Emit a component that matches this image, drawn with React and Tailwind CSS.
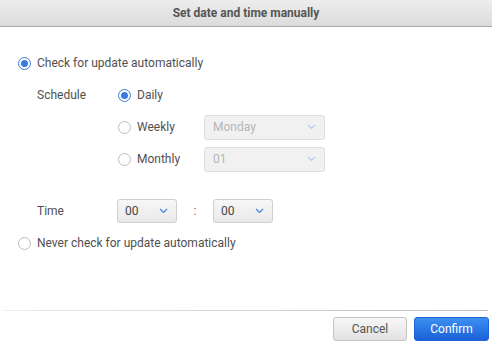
import React from "react";

const font = { fontFamily: "Roboto, 'Liberation Sans', sans-serif" };

function Radio({ checked }) {
  return checked ? (
    <span className="flex h-[13px] w-[13px] shrink-0 items-center justify-center rounded-full border-[1.5px] border-[#3a7be0] bg-white">
      <span className="h-[7px] w-[7px] rounded-full bg-[#3a7be0]" />
    </span>
  ) : (
    <span className="h-[13px] w-[13px] shrink-0 rounded-full border border-[#bdbdbd] bg-white" />
  );
}

function Chevron({ color }) {
  return (
    <svg width="9" height="6" viewBox="0 0 9 6" fill="none">
      <path d="M1 1l3.5 3.5L8 1" stroke={color} strokeWidth="1.2" />
    </svg>
  );
}

function DisabledSelect({ value }) {
  return (
    <div className="flex h-[25px] w-[121px] items-center justify-between rounded-[3px] border border-[#dedede] bg-[#f1f1f1] pl-[8px] pr-[8px] text-[12px] text-[#b5b5b5]">
      <span>{value}</span>
      <Chevron color="#b9c9e2" />
    </div>
  );
}

function TimeSelect({ value }) {
  return (
    <div className="flex h-[24px] w-[60px] items-center justify-between rounded-[3px] border border-[#cfcfcf] bg-gradient-to-b from-[#f7f7f7] to-[#e9e9e9] pl-[7px] pr-[8px] text-[12px] text-[#444]">
      <span>{value}</span>
      <Chevron color="#3f82e0" />
    </div>
  );
}

export default function App() {
  return (
    <div style={font} className="flex h-[347px] w-[492px] flex-col bg-white text-[12px] text-[#505050]">
      <div className="flex h-[27px] shrink-0 items-center justify-center border-b border-[#a9a9a9] bg-gradient-to-b from-[#ededed] to-[#dcdcdc] text-[12px] font-bold text-[#555]">
        Set date and time manually
      </div>
      <div className="flex flex-1 flex-col pt-[20px]">
        <div className="flex h-[32px] items-center gap-[6px] pl-[18px]">
          <Radio checked />
          <span>Check for update automatically</span>
        </div>
        <div className="flex h-[32px] items-center pl-[37px]">
          <span className="w-[81px]">Schedule</span>
          <div className="flex items-center gap-[6px]">
            <Radio checked />
            <span>Daily</span>
          </div>
        </div>
        <div className="flex h-[32px] items-center pl-[118px]">
          <div className="flex w-[86px] items-center gap-[6px]">
            <Radio />
            <span>Weekly</span>
          </div>
          <DisabledSelect value="Monday" />
        </div>
        <div className="flex h-[32px] items-center pl-[118px]">
          <div className="flex w-[86px] items-center gap-[6px]">
            <Radio />
            <span>Monthly</span>
          </div>
          <DisabledSelect value="01" />
        </div>
        <div className="mt-[20px] flex h-[32px] items-center pl-[37px]">
          <span className="w-[80px]">Time</span>
          <TimeSelect value="00" />
          <span className="w-[36px] text-center text-[#777]">:</span>
          <TimeSelect value="00" />
        </div>
        <div className="flex h-[32px] items-center gap-[6px] pl-[18px]">
          <Radio />
          <span>Never check for update automatically</span>
        </div>
      </div>
      <div className="shrink-0 pb-[6px]">
        <div className="mx-[4px] h-px bg-gradient-to-r from-[#ececec] to-[#bdbdbd]" />
        <div className="flex justify-end gap-[7px] pr-[3px] pt-[6px]">
          <button className="flex h-[24px] w-[74px] items-center justify-center rounded-[3px] border border-[#c4c4c4] bg-gradient-to-b from-[#f7f7f7] to-[#e2e2e2] text-[12px] text-[#555]">
            Cancel
          </button>
          <button className="flex h-[24px] w-[75px] items-center justify-center rounded-[3px] border border-[#1e63d6] bg-gradient-to-b from-[#3d90f2] to-[#1a60d8] text-[12px] text-white">
            Confirm
          </button>
        </div>
      </div>
    </div>
  );
}
